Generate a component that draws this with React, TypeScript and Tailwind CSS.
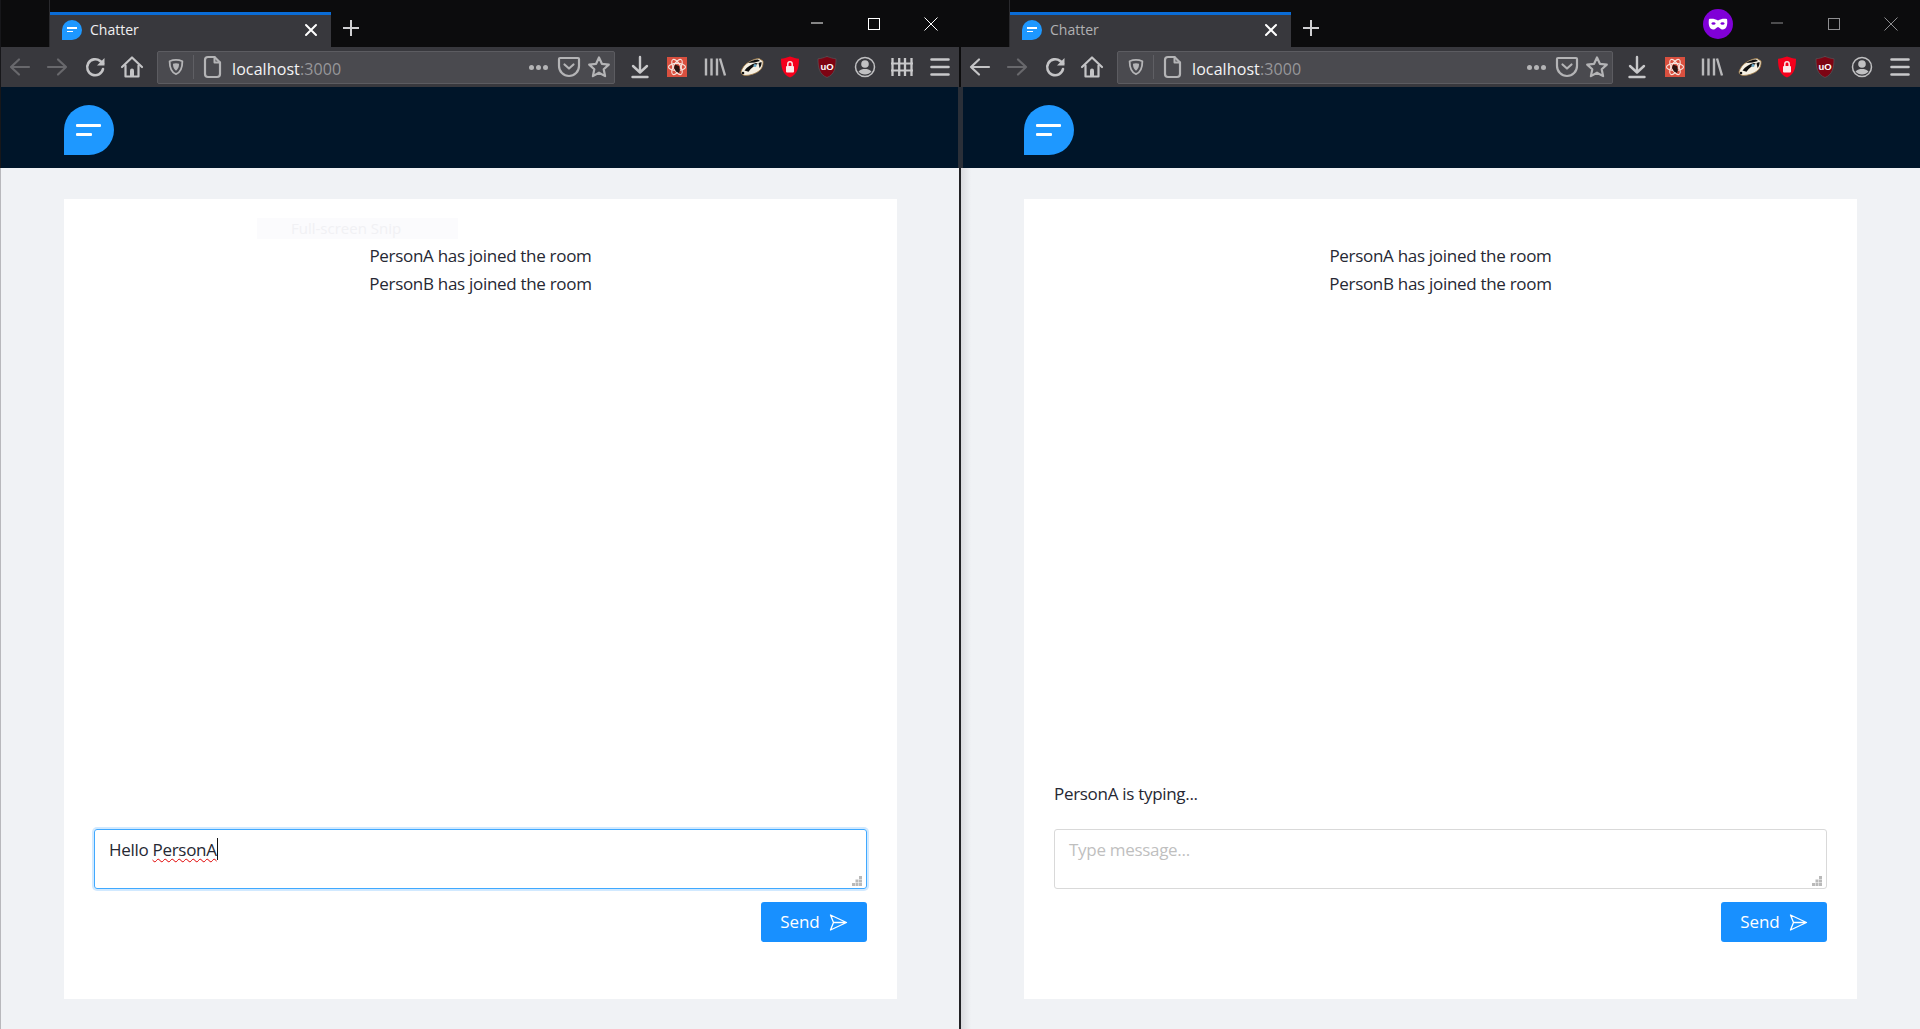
import React from "react";

const I = "#b4b4b6";

function Svg({ children, size = 24 }: { children: React.ReactNode; size?: number }) {
  return (
    <svg width={size} height={size} viewBox="0 0 24 24" fill="none" strokeLinecap="round" strokeLinejoin="round">
      {children}
    </svg>
  );
}

function Logo({ small }: { small?: boolean }) {
  if (small) {
    return (
      <div className="w-[20px] h-[20px] shrink-0 bg-[#1e98ff] rounded-tl-full rounded-tr-full rounded-br-full flex flex-col justify-center items-start gap-[2px] pl-[5px]">
        <div className="w-[10px] h-[1.5px] bg-white" />
        <div className="w-[6px] h-[1.5px] bg-white" />
      </div>
    );
  }
  return (
    <div className="w-[50px] h-[50px] shrink-0 bg-[#1e98ff] rounded-tl-full rounded-tr-full rounded-br-full flex flex-col items-start gap-[6px] pt-[19px] pl-[12px]">
      <div className="w-[25px] h-[3px] bg-white rounded-[1px]" />
      <div className="w-[16px] h-[3px] bg-white rounded-[1px]" />
    </div>
  );
}

const Arrow = ({ dir, color }: { dir: "l" | "r"; color: string }) => (
  <Svg>
    <g stroke={color} strokeWidth="2.2" transform={dir === "r" ? "rotate(180 12 12)" : undefined}>
      <path d="M3 12h18M11 4.500 3 12l8 7.500" />
    </g>
  </Svg>
);

const Reload = () => (
  <Svg>
    <path d="M20 14a8 8 0 1 1-2.800-8L20 8.500" stroke="#c4c4c6" strokeWidth="2.600" />
    <path d="M21.500 3v7.500H14z" fill="#c4c4c6" />
  </Svg>
);

const Home = () => (
  <Svg>
    <path d="M2 12 12 2.500 22 12" stroke="#c4c4c6" strokeWidth="2.200" />
    <path d="M5.500 10.500V21.500h13V10.500" stroke="#c4c4c6" strokeWidth="2.200" />
    <path d="M10 21.500v-6a2 2 0 0 1 4 0v6z" fill="#c4c4c6" />
  </Svg>
);

const Shield = () => (
  <Svg size={20}>
    <path d="M12 2.500c3 0 6 .7 8.500 1.800 0 8-2 14.700-8.500 17.200C5.500 19 3.500 12.300 3.500 4.300 6 3.200 9 2.500 12 2.500z" stroke={I} strokeWidth="2.400" />
    <path d="M12 7c1.500 0 2.800.3 4 .8 0 4-.9 7.200-4 9.200z" fill={I} />
    <path d="M12 7c-1.500 0-2.800.3-4 .8 0 4 .9 7.200 4 9.200z" fill={I} />
  </Svg>
);

const Page = () => (
  <Svg>
    <path d="M5 5a3 3 0 0 1 3-3h6.500L20 7.500V19a3 3 0 0 1-3 3H8a3 3 0 0 1-3-3z" stroke={I} strokeWidth="2.200" />
    <path d="M14.500 2v5.500H20" stroke={I} strokeWidth="2" />
  </Svg>
);

const Dots = () => (
  <div className="flex gap-[2px]">
    <div className="w-[5px] h-[5px] rounded-full bg-[#b4b4b6]" />
    <div className="w-[5px] h-[5px] rounded-full bg-[#b4b4b6]" />
    <div className="w-[5px] h-[5px] rounded-full bg-[#b4b4b6]" />
  </div>
);

const Pocket = () => (
  <Svg>
    <path d="M3 3h18a1 1 0 0 1 1 1v7a10 10 0 0 1-20 0V4a1 1 0 0 1 1-1z" stroke={I} strokeWidth="2.200" />
    <path d="m7.500 9.500 4.500 4 4.500-4" stroke={I} strokeWidth="2.200" />
  </Svg>
);

const Star = () => (
  <Svg>
    <path d="m12 2.500 2.900 6.300 6.900.8-5.100 4.700 1.400 6.800L12 17.700l-6.100 3.400 1.400-6.800-5.100-4.700 6.900-.8z" stroke={I} strokeWidth="2.200" />
  </Svg>
);

const Download = () => (
  <Svg>
    <path d="M12 2v15M5 11l7 6.500 7-6.500M4.500 22h15" stroke="#c8c8ca" strokeWidth="2.400" />
  </Svg>
);

const Atom = () => (
  <Svg>
    <rect x="2" y="2" width="20" height="20" fill="#d9503f" />
    <g stroke="#f6e3dd" strokeWidth="1.100">
      <ellipse cx="12" cy="12" rx="8.500" ry="3.600" />
      <ellipse cx="12" cy="12" rx="8.500" ry="3.600" transform="rotate(60 12 12)" />
      <ellipse cx="12" cy="12" rx="8.500" ry="3.600" transform="rotate(120 12 12)" />
    </g>
    <path d="M10 9.500l4 1.500 1 4-1 3-3-1.500-2-3.500z" fill="#2a1412" />
  </Svg>
);

const Library = () => (
  <Svg>
    <g stroke="#b8b8ba" strokeWidth="2.400" strokeLinecap="butt">
      <path d="M3 3.500v17M8.500 3.500v17M14 3.500v17M17 3.500l5 17" />
    </g>
  </Svg>
);

const Badger = () => (
  <svg width="24" height="24" viewBox="0 0 24 24">
    <path d="M1 17c1-4 4-8 8-10 3-2 7-3.500 10-3.500l4 2.500c.5 4-1 8-4 10-3 2.500-9 4.500-14 4.500-2.500-.5-4-1.500-4-3.500z" fill="#f5efe2" stroke="#a17a42" strokeWidth=".8" />
    <path d="M4.500 15.500c3-4 7-6.500 11.500-7.500l2 .8c-4 2-7 4.500-9.500 8z" fill="#0e0e0e" />
    <path d="M8 8c3-2 7-3.500 10-3.500l2 1.500-5.500 1.500z" fill="#0e0e0e" />
    <path d="M18.500 8l3-1c.3 2-.5 4.500-2 6z" fill="#0e0e0e" />
    <circle cx="15" cy="10.500" r="1.500" fill="#6aa9c9" />
    <circle cx="3" cy="18" r="1.300" fill="#111" />
  </svg>
);

const RedShield = () => (
  <Svg>
    <path d="M12 1.500c3.500 1.300 6 2 9 2.300 0 9-1.500 15.700-9 18.700-7.500-3-9-9.700-9-18.700 3-.3 5.500-1 9-2.300z" fill="#f4001c" />
    <rect x="8" y="11" width="8" height="6.500" rx="1" fill="#fbe9e9" />
    <path d="M9.800 11V9a2.200 2.200 0 0 1 4.400 0v2" stroke="#fbe9e9" strokeWidth="1.500" />
  </Svg>
);

const UBlock = () => (
  <Svg>
    <path d="M12 1.500c3.500 1.300 6 2 9 2.300 0 9-1.500 15.700-9 18.700-7.500-3-9-9.700-9-18.700 3-.3 5.500-1 9-2.300z" fill="#7d0413" stroke="#5a5a5e" strokeWidth=".6" />
    <text x="12" y="14.500" textAnchor="middle" fill="#fff" fontSize="9.500" fontWeight="700" fontFamily="Liberation Sans, sans-serif">uO</text>
  </Svg>
);

const Account = () => (
  <Svg>
    <circle cx="12" cy="12" r="9.500" stroke="#c0c0c2" strokeWidth="1.500" />
    <circle cx="12" cy="9" r="3.800" fill="#c0c0c2" />
    <path d="M5.500 16.500c2-2 4-2.500 6.500-2.500s4.500.5 6.500 2.500c-1.500 2-4 3-6.500 3s-5-1-6.500-3z" fill="#c0c0c2" />
  </Svg>
);

const Fence = () => (
  <Svg>
    <g stroke="#c8c8ca" strokeWidth="2.300" strokeLinecap="butt">
      <path d="M2.500 3v18M9.200 3v18M15 3v18M21.500 3v18" />
      <path d="M1 8.500h22M1 15.500h22" strokeWidth="1.800" />
    </g>
  </Svg>
);

const Menu = () => (
  <Svg>
    <path d="M3.500 4.500h17M3.500 12h17M3.500 19.500h17" stroke="#c8c8ca" strokeWidth="2.600" />
  </Svg>
);

const Mask = () => (
  <div className="w-[30px] h-[30px] rounded-full bg-[#8000d7] flex items-center justify-center">
    <svg width="20" height="12" viewBox="0 0 20 12">
      <path d="M10 2.500C7 .5 3.500.5 1 1 .3 5 .6 11 5 11.500c2.500.3 3.500-2.500 5-2.500s2.500 2.800 5 2.500C19.400 11 19.700 5 19 1c-2.500-.5-6-.5-9 1.500z" fill="#fff" />
      <ellipse cx="5.500" cy="5.500" rx="2" ry="1.300" fill="#8000d7" />
      <ellipse cx="14.500" cy="5.500" rx="2" ry="1.300" fill="#8000d7" />
    </svg>
  </div>
);

const Btn = ({ children }: { children: React.ReactNode }) => (
  <div className="w-[37.5px] h-[40px] shrink-0 flex items-center justify-center">{children}</div>
);

function Caption({ color }: { color: string }) {
  return (
    <>
      <div className="w-[57px] h-[47px] flex items-center justify-center">
        <svg width="14" height="14" viewBox="0 0 14 14"><path d="M1 6h12" stroke={color} strokeWidth="1" /></svg>
      </div>
      <div className="w-[57px] h-[47px] flex items-center justify-center">
        <svg width="14" height="14" viewBox="0 0 14 14"><rect x="1.500" y="1.500" width="11" height="11" stroke={color} strokeWidth="1" fill="none" /></svg>
      </div>
      <div className="w-[57px] h-[47px] flex items-center justify-center">
        <svg width="14" height="14" viewBox="0 0 14 14"><path d="M.5.500l13 13M13.500.500l-13 13" stroke={color} strokeWidth="1" /></svg>
      </div>
    </>
  );
}

function Grip() {
  return (
    <svg className="absolute right-[3px] bottom-[1px]" width="11" height="11" viewBox="0 0 11 11" fill="#b9b9b9">
      <rect x="7" y="0" width="3" height="3" />
      <rect x="3.500" y="3.500" width="3" height="3" />
      <rect x="7" y="3.500" width="3" height="3" />
      <rect x="0" y="7" width="3" height="3" />
      <rect x="3.500" y="7" width="3" height="3" />
      <rect x="7" y="7" width="3" height="3" />
    </svg>
  );
}

function Window({ right }: { right?: boolean }) {
  return (
    <div className="relative w-[960px] h-[1029px] shrink-0 flex flex-col overflow-hidden">
      {/* title bar */}
      <div className="h-[47px] shrink-0 bg-[#0c0c0d] flex items-end">
        <div className="w-[50px] shrink-0 h-[47px] border-r border-[#2a2a2d]" />
        <div className="w-[281px] h-[35px] shrink-0 bg-[#38383d] border-t-[3px] border-[#0a6cd6] flex items-center pl-[12px] pr-[13px] pb-[3px]">
          <Logo small />
          <span className={`ml-[8px] flex-1 text-[14px] leading-[20px] ${right ? "text-[#b1b1b3]" : "text-[#f0f0f2]"}`}>Chatter</span>
          <svg width="14" height="14" viewBox="0 0 14 14">
            <path d="m2 2 10 10M12 2 2 12" stroke="#fff" strokeWidth="2" strokeLinecap="round" />
          </svg>
        </div>
        <div className="w-[40px] h-[35px] flex items-center justify-center pb-[3px]">
          <svg width="20" height="20" viewBox="0 0 20 20">
            <path d="M10 2v16M2 10h16" stroke="#d0d0d2" strokeWidth="2" />
          </svg>
        </div>
        <div className="flex-1 h-[47px] flex items-start justify-end">
          {right && <div className="mr-[15px] mt-[9px]"><Mask /></div>}
          <Caption color={right ? "#8e8e90" : "#ffffff"} />
          <div className="w-[1px]" />
        </div>
      </div>
      {/* toolbar */}
      <div className="h-[40px] shrink-0 bg-[#38383d] flex items-center pl-[1px]">
        <Btn><Arrow dir="l" color={right ? "#c4c4c6" : "#68686c"} /></Btn>
        <Btn><Arrow dir="r" color="#68686c" /></Btn>
        <Btn><Reload /></Btn>
        <Btn><Home /></Btn>
        <div className="ml-[6px] flex-1 h-[33px] bg-[#4a4a4f] border border-[#5c5c61] rounded-[2px] flex items-center pl-[9px]">
          <div className="w-[18px] flex justify-center"><Shield /></div>
          <div className="ml-[8px] w-px h-[24px] bg-[#5f5f64]" />
          <div className="ml-[6px] flex justify-center"><Page /></div>
          <span className="ml-[8px] pt-[3px] text-[16px] tracking-[0.1px] text-[#f4f4f5]">localhost<span className="text-[#97979a]">:3000</span></span>
          <div className="flex-1" />
          <Dots />
          <div className="w-[30px] flex justify-center ml-[6px]"><Pocket /></div>
          <div className="w-[30px] flex justify-center"><Star /></div>
        </div>
        <div className="w-[6px] shrink-0" />
        <Btn><Download /></Btn>
        <Btn><Atom /></Btn>
        <Btn><Library /></Btn>
        <Btn><Badger /></Btn>
        <Btn><RedShield /></Btn>
        <Btn><UBlock /></Btn>
        <Btn><Account /></Btn>
        {!right && <Btn><Fence /></Btn>}
        <Btn><Menu /></Btn>
        <div className="w-[1.5px] shrink-0" />
      </div>
      {/* app header */}
      <div className="h-[81px] shrink-0 bg-[#001529] flex items-center pl-[64px] pt-[5px]">
        <Logo />
      </div>
      {/* content */}
      <div className="flex-1 bg-[#f0f2f5] pt-[31px] pl-[64px] pr-[63px]">
        <div className="h-[800px] bg-white flex flex-col pt-[43px] px-[30px] pb-[57px] text-[#262833]">
          <div className="flex-1 text-center text-[17px] leading-[28px] tracking-[-0.3px]">
            <div>PersonA has joined the room</div>
            <div>PersonB has joined the room</div>
          </div>
          <div className="h-[28px] mb-[21px] text-[17px] leading-[28px] tracking-[-0.3px]">{right ? "PersonA is typing..." : ""}</div>
          {right ? (
            <div className="relative h-[60px] rounded-[3px] border border-[#d9d9d9] px-[14px] pt-[6px] text-[17px] leading-[28px] tracking-[-0.3px] text-[#bfbfbf]">
              Type message...
              <Grip />
            </div>
          ) : (
            <div className="relative h-[60px] rounded-[3px] border border-[#40a9ff] shadow-[0_0_0_2px_rgba(24,144,255,0.2)] px-[14px] pt-[6px] text-[17px] leading-[28px] tracking-[-0.3px]">
              Hello <span className="underline decoration-wavy decoration-[#e00000] decoration-1 underline-offset-2">PersonA</span>
              <span className="inline-block align-[-4px] w-px h-[22px] bg-[#111]" />
              <Grip />
            </div>
          )}
          <button className="mt-[13px] self-end w-[106px] h-[40px] rounded-[3px] bg-[#1890ff] text-white text-[17px] tracking-[-0.1px] flex items-center justify-center gap-[9px]">
            Send
            <svg width="19" height="19" viewBox="0 0 19 19" fill="none">
              <path d="M1.500 2 17.500 9.500 1.500 17l3-7.500zM4.500 9.500h13" stroke="#fff" strokeWidth="1.300" strokeLinejoin="round" />
            </svg>
          </button>
        </div>
      </div>
      {!right && (
        <div className="absolute left-[257px] top-[218px] w-[201px] h-[21px] bg-[#fbfbfd] flex items-center pl-[34px] text-[15px] text-[#f1f1f4]">
          Full-screen Snip
        </div>
      )}
      {/* window edges */}
      {right ? (
        <>
          <div className="absolute left-0 top-0 w-px h-[87px] bg-[#0c0c0d]" />
          <div className="absolute left-0 top-[87px] w-[3px] h-[81px] bg-[#2a2f38]" />
          <div className="absolute left-0 top-[168px] w-px bottom-0 bg-[#222225]" />
          <div className="absolute left-px top-[168px] w-[10px] bottom-0 bg-gradient-to-r from-[#d9dade] to-transparent" />
        </>
      ) : (
        <>
          <div className="absolute left-0 top-0 w-px h-[168px] bg-[#17171a]" />
          <div className="absolute left-0 top-[168px] w-px bottom-0 bg-[#b8b8bc]" />
          <div className="absolute right-0 top-0 w-px h-[87px] bg-[#0c0c0d]" />
          <div className="absolute right-0 top-[87px] w-[2px] h-[81px] bg-[#2a2f38]" />
          <div className="absolute right-0 top-[168px] w-px bottom-0 bg-[#222225]" />
        </>
      )}
    </div>
  );
}

export default function App() {
  return (
    <div className="flex w-[1920px] h-[1029px] overflow-hidden font-['Open_Sans','Noto_Sans',sans-serif]">
      <Window />
      <Window right />
    </div>
  );
}
